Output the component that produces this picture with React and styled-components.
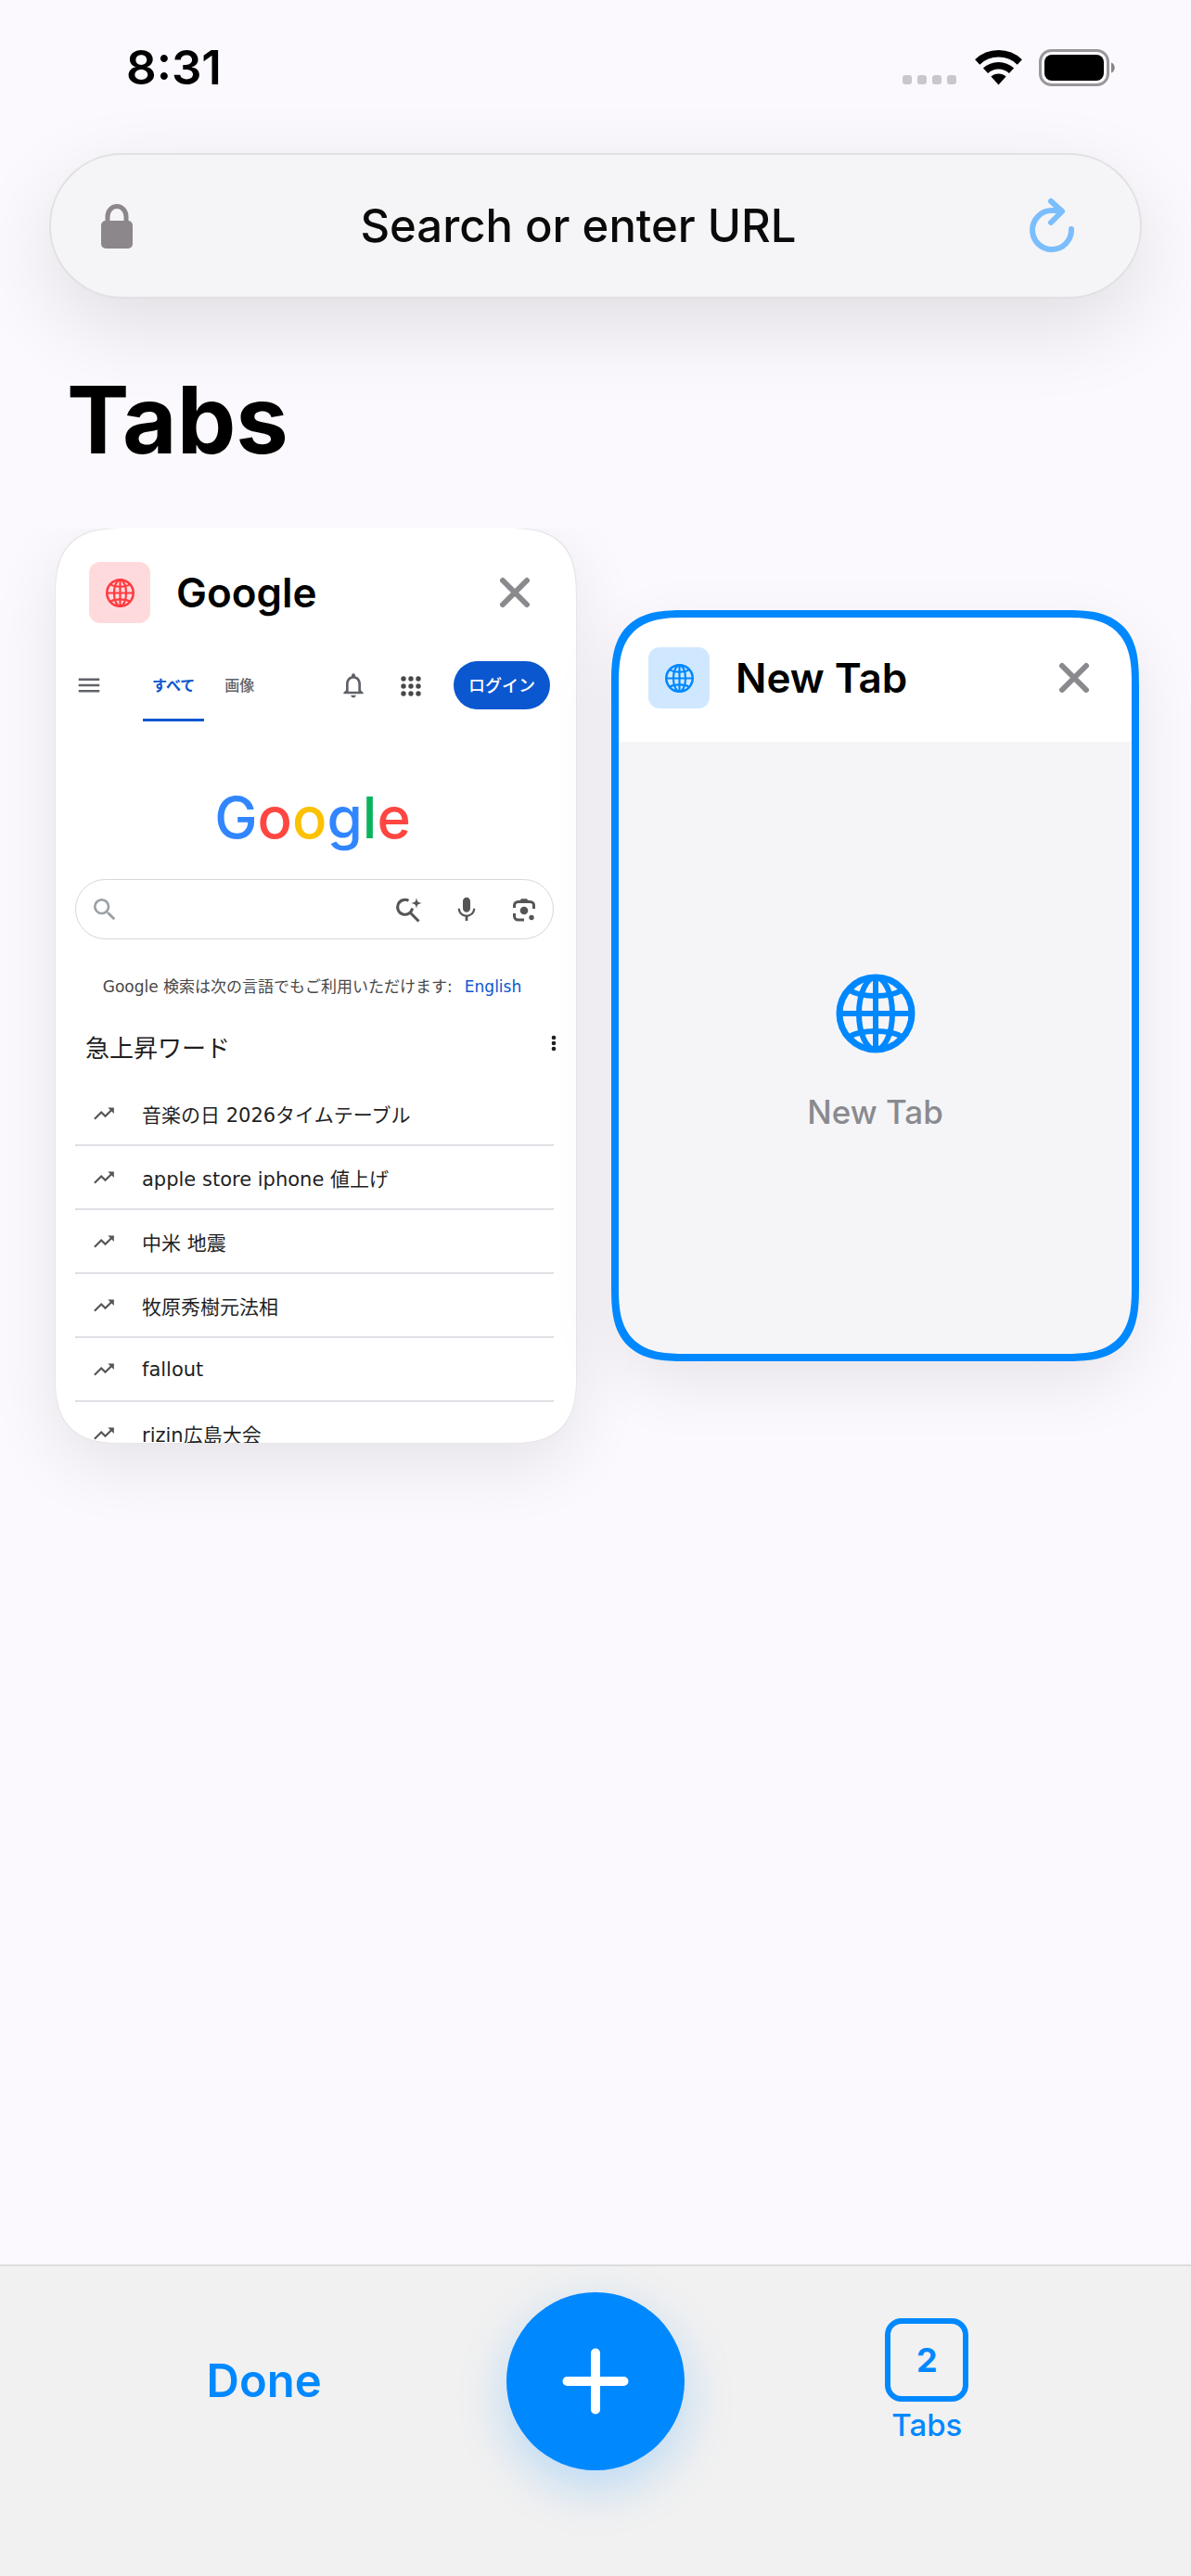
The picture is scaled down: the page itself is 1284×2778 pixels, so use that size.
import React from 'react';
import styled, { createGlobalStyle, css } from 'styled-components';
import { MdMenu, MdMic, MdNotificationsNone, MdSearch, MdTrendingUp } from 'react-icons/md';

const BLUE = '#0088ff';

const trends = [
    '音楽の日 2026タイムテーブル',
    'apple store iphone 値上げ',
    '中米 地震',
    '牧原秀樹元法相',
    'fallout',
    'rizin広島大会',
]

function Globe({size}) {
    return(
        <svg width={size} height={size} viewBox='0 0 96 96' fill='none' stroke='currentColor' strokeWidth='6' strokeLinecap='round' aria-hidden='true'>
            <circle cx='48' cy='48' r='39' strokeWidth='7' />
            <ellipse cx='48' cy='48' rx='18' ry='39' />
            <path d='M48 9V87M9 48H87' />
            <path d='M20 23C33 31 63 31 76 23M20 73C33 65 63 65 76 73' />
        </svg>
    )
}

function Cross() {
    return(
        <svg width='34' height='34' viewBox='0 0 34 34' fill='none' stroke='currentColor' strokeWidth='6' strokeLinecap='round' aria-hidden='true'>
            <path d='M4 4L30 30M30 4L4 30' />
        </svg>
    )
}

function StatusBar() {
    return(
        <StatusRow>
            <Time>8:31</Time>
            <StatusIcons>
                <svg width='60' height='38' viewBox='0 0 60 38' fill='#c9c7cb'>
                    <rect x='0' y='27' width='10' height='10' rx='3' />
                    <rect x='16' y='27' width='10' height='10' rx='3' />
                    <rect x='32' y='27' width='10' height='10' rx='3' />
                    <rect x='48' y='27' width='10' height='10' rx='3' />
                </svg>
                <svg width='51' height='38' viewBox='0 0 51 38' fill='none' stroke='#000' strokeWidth='7.5'>
                    <path d='M2.7 12.9A33.2 33.2 0 0 1 48.3 12.9M11.5 22.3A20.3 20.3 0 0 1 39.5 22.3' />
                    <path d='M25.5 37.4L17.4 28.6A12 12 0 0 1 33.6 28.6Z' fill='#000' stroke='none' />
                </svg>
                <svg width='83' height='40' viewBox='0 0 83 40'>
                    <rect x='1.5' y='1.5' width='73' height='37' rx='12' fill='none' stroke='#99979b' strokeWidth='3' />
                    <rect x='6' y='6' width='64' height='28' rx='8' />
                    <path d='M78 14.5C83 16 83 24 78 25.5Z' fill='#88868a' />
                </svg>
            </StatusIcons>
        </StatusRow>
    )
}

function AddressBar() {
    return(
        <Address>
            <svg width='34' height='48' viewBox='0 0 34 48' aria-hidden='true'>
                <rect y='18' width='34' height='30' rx='5' fill='#8b878b' />
                <path d='M7 20V13.5A10 11 0 0 1 27 13.5V20' fill='none' stroke='#8b878b' strokeWidth='5' />
            </svg>
            <AddressInput type='text' aria-label='Address' placeholder='Search or enter URL' />
            <IconButton aria-label='Reload' $color='#7bbefd'>
                <svg width='60' height='66' viewBox='0 0 60 66' fill='none' stroke='currentColor' strokeWidth='6' strokeLinecap='round' strokeLinejoin='round'>
                    <path d='M51 36A21 21 0 1 1 30 16H40' />
                    <path d='M29 6L41 17L29 29' />
                </svg>
            </IconButton>
        </Address>
    )
}

function TabCard({title, color, tint, active = false, children}) {
    return(
        <Card $active={active}>
            <CardHeader>
                <Favicon $color={color} $tint={tint}><Globe size={35} /></Favicon>
                <CardTitle>{title}</CardTitle>
                <IconButton aria-label={'Close ' + title} $color='#8a8a8e' $size={60}><Cross /></IconButton>
            </CardHeader>
            {children}
        </Card>
    )
}

function GooglePage() {
    return(
        <Preview $tall>
            <PageNav>
                <PageTools>
                    <IconButton aria-label='メニュー' $color='#5f6368'><MdMenu size={30} /></IconButton>
                </PageTools>
                <PageTabs>
                    <PageTab href='#all' $active>すべて</PageTab>
                    <PageTab href='#images'>画像</PageTab>
                </PageTabs>
                <PageTools>
                    <IconButton aria-label='お知らせ' $color='#5f6368'><MdNotificationsNone size={32} /></IconButton>
                    <IconButton aria-label='アプリ' $color='#474747'>
                        <svg width='32' height='32' viewBox='0 0 32 32' fill='currentColor'>
                            {[8, 16, 24].map(y => [8, 16, 24].map(x => (
                                <circle key={x + '-' + y} cx={x} cy={y + 1} r='2.7' />
                            )))}
                        </svg>
                    </IconButton>
                    <Login>ログイン</Login>
                </PageTools>
            </PageNav>
            <Logo aria-label='Google'>
                <Letter $color='#3186ff'>G</Letter>
                <Letter $color='#ff4641'>o</Letter>
                <Letter $color='#fcc101'>o</Letter>
                <Letter $color='#3186ff'>g</Letter>
                <Letter $color='#0bb45c'>l</Letter>
                <Letter $color='#ff4641'>e</Letter>
            </Logo>
            <SearchBox>
                <MdSearch size={32} color='#9aa0a6' />
                <SearchInput type='text' aria-label='検索' />
                <IconButton aria-label='AI モード' $color='#555'>
                    <svg width='32' height='32' viewBox='0 0 32 32' fill='none' stroke='currentColor' strokeWidth='3'>
                        <path d='M15.5 6.3A8 8 0 1 0 19.5 14.5M17.5 19.5L26.5 28.5' />
                        <path d='M24 3C24.8 7.5 25.5 8.2 30 9C25.5 9.8 24.8 10.5 24 15C23.2 10.5 22.5 9.8 18 9C22.5 8.2 23.2 7.5 24 3Z' fill='currentColor' stroke='none' />
                    </svg>
                </IconButton>
                <IconButton aria-label='音声検索' $color='#555'><MdMic size={32} /></IconButton>
                <IconButton aria-label='画像で検索' $color='#555'>
                    <svg width='32' height='32' viewBox='0 0 32 32' fill='none' stroke='currentColor' strokeWidth='3'>
                        <path d='M5.5 14V11.5A4 4 0 0 1 9.5 7.5H22.5A4 4 0 0 1 26.5 11.5V15M5.5 20V23A4 4 0 0 0 9.5 27H16' />
                        <path d='M11 7L13 4.3H19L21 7Z' fill='currentColor' stroke='none' />
                        <circle cx='16' cy='17' r='4.3' fill='currentColor' stroke='none' />
                        <circle cx='24' cy='24.5' r='2.7' fill='currentColor' stroke='none' />
                    </svg>
                </IconButton>
            </SearchBox>
            <Languages>
                Google 検索は次の言語でもご利用いただけます:
                <a href='#en'>English</a>
            </Languages>
            <TrendHead>
                <TrendTitle>急上昇ワード</TrendTitle>
                <IconButton aria-label='その他' $color='#1f1f1f'>
                    <svg width='24' height='22' viewBox='0 0 24 22' fill='currentColor'>
                        <circle cx='12' cy='4' r='2.3' />
                        <circle cx='12' cy='10' r='2.3' />
                        <circle cx='12' cy='16' r='2.3' />
                    </svg>
                </IconButton>
            </TrendHead>
            <TrendList>
                {trends.map(word => (
                    <Trend key={word}>
                        <MdTrendingUp size={26} color='#555' />
                        {word}
                    </Trend>
                ))}
            </TrendList>
        </Preview>
    )
}

export default function App() {
    return(
        <Screen>
            <GlobalStyle />
            <StatusBar />
            <AddressBar />
            <Heading>Tabs</Heading>
            <TabGrid>
                <TabCard title='Google' color='#ff3b40' tint='#ffdadc'>
                    <GooglePage />
                </TabCard>
                <TabCard title='New Tab' color={BLUE} tint='#d0e8ff' active>
                    <Preview>
                        <Empty>
                            <Globe size={96} />
                            <EmptyLabel>New Tab</EmptyLabel>
                        </Empty>
                    </Preview>
                </TabCard>
            </TabGrid>
            <BottomBar>
                <DoneButton>Done</DoneButton>
                <AddButton aria-label='New tab'>
                    <svg width='80' height='80' viewBox='0 0 80 80' stroke='currentColor' strokeWidth='10' strokeLinecap='round'>
                        <path d='M40 9.5V70.5M9.5 40H70.5' />
                    </svg>
                </AddButton>
                <TabsButton>
                    <TabCount>2</TabCount>
                    Tabs
                </TabsButton>
            </BottomBar>
        </Screen>
    )
}

const GlobalStyle = createGlobalStyle`
    * {
        box-sizing: border-box;
    }
    body {
        margin: 0;
        background-color: #fbf9fd;
        font-family: Inter, 'Noto Sans CJK JP', sans-serif;
    }
    button, input {
        font-family: inherit;
        border: none;
        background: none;
        padding: 0;
    }
    button {
        cursor: pointer;
    }
    a {
        text-decoration: none;
    }
    svg {
        display: block;
        flex-shrink: 0;
    }
`

/* continuous corners where the browser knows them */
const smooth = (round, wide) => css`
    border-radius: ${round}px;
    @supports (corner-shape: squircle) {
        border-radius: ${wide}px;
        corner-shape: superellipse(1.5);
    }
`

const Screen = styled.div`
    display: flex;
    flex-direction: column;
    min-height: 100vh;
`

const StatusRow = styled.header`
    display: flex;
    justify-content: space-between;
    align-items: center;
    padding: 42px 81px 0 136px;
`

const Time = styled.span`
    font-size: 51px;
    line-height: 62px;
    font-weight: 600;
`

const StatusIcons = styled.div`
    display: flex;
    align-items: center;
    gap: 18px;
`

const Address = styled.div`
    display: flex;
    align-items: center;
    height: 157px;
    margin: 61px 53px 0;
    padding: 0 65px 0 54px;
    border: 2px solid #e1e0e3;
    border-radius: 79px;
    background-color: #f5f4f6;
    box-shadow: 0 30px 90px rgba(0, 0, 0, .11);
`

const AddressInput = styled.input`
    flex: 1;
    min-width: 0;
    outline: none;
    font-size: 49px;
    line-height: 62px;
    font-weight: 500;
    text-align: center;
    &::placeholder {
        color: #0a0a0a;
        opacity: 1;
    }
`

const IconButton = styled.button`
    display: flex;
    align-items: center;
    justify-content: center;
    flex-shrink: 0;
    color: ${props => props.$color};
    ${props => props.$size && `
        width: ${props.$size}px;
        height: ${props.$size}px;
    `}
`

const Heading = styled.h1`
    margin: 70px 72px 58px;
    font-size: 101px;
    line-height: 120px;
    font-weight: 700;
`

const TabGrid = styled.main`
    flex: 1;
    display: grid;
    grid-template-columns: 1fr 1fr;
    align-content: start;
    align-items: center;
    gap: 42px;
    padding: 0 60px 60px;
    overflow: hidden;
`

const Card = styled.article`
    min-width: 0;
    background-color: #fff;
    overflow: hidden;
    box-shadow: 0 0 0 1px #e6e5e8, 0 24px 75px rgba(0, 0, 0, .09);
    ${smooth(60, 76)}
    ${props => props.$active && `
        outline: 8px solid ${BLUE};
        outline-offset: -4px;
    `}
`

const CardHeader = styled.div`
    display: flex;
    align-items: center;
    height: 138px;
    padding: 0 36px;
`

const Favicon = styled.span`
    display: flex;
    align-items: center;
    justify-content: center;
    width: 66px;
    height: 66px;
    border-radius: 12px;
    color: ${props => props.$color};
    background-color: ${props => props.$tint};
`

const CardTitle = styled.h2`
    flex: 1;
    margin: 0 0 0 28px;
    font-size: 44px;
    line-height: 54px;
    font-weight: 600;
`

const Preview = styled.div`
    display: flex;
    flex-direction: column;
    height: ${props => props.$tall ? '848px' : '664px'};
    overflow: hidden;
    background-color: ${props => props.$tall ? '#fff' : '#f5f5f8'};
`

const PageNav = styled.nav`
    display: flex;
    flex-shrink: 0;
    height: 70px;
    padding: 0 28px 0 21px;
`

const PageTools = styled.div`
    display: flex;
    align-items: center;
    gap: 30px;
    padding-bottom: 8px;
`

const PageTabs = styled.div`
    flex: 1;
    display: flex;
    gap: 12px;
    margin-left: 43px;
`

const PageTab = styled.a`
    display: flex;
    align-items: center;
    padding: 0 10px 8px;
    border-bottom: 3px solid ${props => props.$active ? '#0b57d0' : 'transparent'};
    color: ${props => props.$active ? '#0b57d0' : '#5f6368'};
    font-size: 16px;
    font-weight: ${props => props.$active ? 700 : 500};
`

const Login = styled.button`
    height: 52px;
    padding: 0 16px 3px;
    border-radius: 26px;
    color: #fff;
    background-color: #0b57d0;
    font-size: 18px;
    font-weight: 500;
`

const Logo = styled.div`
    margin-top: 64px;
    padding-right: 7px;
    font-size: 62px;
    line-height: 80px;
    font-weight: 500;
    text-align: center;
`

const Letter = styled.span`
    color: ${props => props.$color};
`

const SearchBox = styled.div`
    display: flex;
    align-items: center;
    flex-shrink: 0;
    gap: 30px;
    height: 65px;
    margin: 26px 24px 0 21px;
    padding: 0 15px;
    border: 1px solid #d5d7dc;
    border-radius: 33px;
`

const SearchInput = styled.input`
    flex: 1;
    min-width: 0;
    outline: none;
    font-size: 21px;
`

/* the text of the page is set wider than the text of the app */
const pageText = css`
    font-family: 'DejaVu Sans', 'Noto Sans CJK JP', sans-serif;
`

const Languages = styled.p`
    margin: 39px 0 0;
    padding-right: 8px;
    color: #474747;
    font-size: 17px;
    line-height: 24px;
    text-align: center;
    white-space: nowrap;
    ${pageText}
    a {
        margin-left: 13px;
        color: #0b57d0;
    }
`

const TrendHead = styled.div`
    display: flex;
    align-items: flex-start;
    justify-content: space-between;
    margin-top: 39px;
    padding: 0 12px 0 32px;
`

const TrendTitle = styled.h3`
    margin: 0;
    color: #1f1f1f;
    font-size: 26px;
    line-height: 32px;
    font-weight: 400;
`

const TrendList = styled.ul`
    margin: 20px 24px 0 21px;
    padding: 0;
    list-style-type: none;
`

const Trend = styled.li`
    display: flex;
    align-items: center;
    gap: 28px;
    height: 69px;
    padding-left: 18px;
    border-bottom: 2px solid #dfe0e5;
    color: #1f1f1f;
    font-size: 21px;
    white-space: nowrap;
    ${pageText}
`

const Empty = styled.div`
    flex: 1;
    display: flex;
    flex-direction: column;
    align-items: center;
    justify-content: center;
    gap: 38px;
    color: ${BLUE};
`

const EmptyLabel = styled.span`
    color: #8a8a8e;
    font-size: 35px;
    line-height: 40px;
    font-weight: 500;
`

const BottomBar = styled.footer`
    display: grid;
    grid-template-columns: 1fr 1fr 1fr;
    justify-items: center;
    align-items: center;
    padding: 28px 106px 114px;
    border-top: 2px solid #dcdcdd;
    background-color: #f1f1f1;
    color: ${BLUE};
`

const DoneButton = styled.button`
    color: inherit;
    font-size: 49px;
    line-height: 62px;
    font-weight: 600;
`

const AddButton = styled.button`
    display: flex;
    align-items: center;
    justify-content: center;
    width: 192px;
    height: 192px;
    border-radius: 50%;
    color: #fff;
    background-color: ${BLUE};
    box-shadow: 0 18px 54px rgba(0, 136, 255, .24);
`

const TabsButton = styled.button`
    display: flex;
    flex-direction: column;
    align-items: center;
    gap: 5px;
    padding-bottom: 2px;
    color: inherit;
    font-size: 33px;
    line-height: 40px;
    font-weight: 500;
`

const TabCount = styled.span`
    display: flex;
    align-items: center;
    justify-content: center;
    width: 90px;
    height: 90px;
    border: 6px solid ${BLUE};
    border-radius: 18px;
    font-size: 36px;
    font-weight: 700;
`
